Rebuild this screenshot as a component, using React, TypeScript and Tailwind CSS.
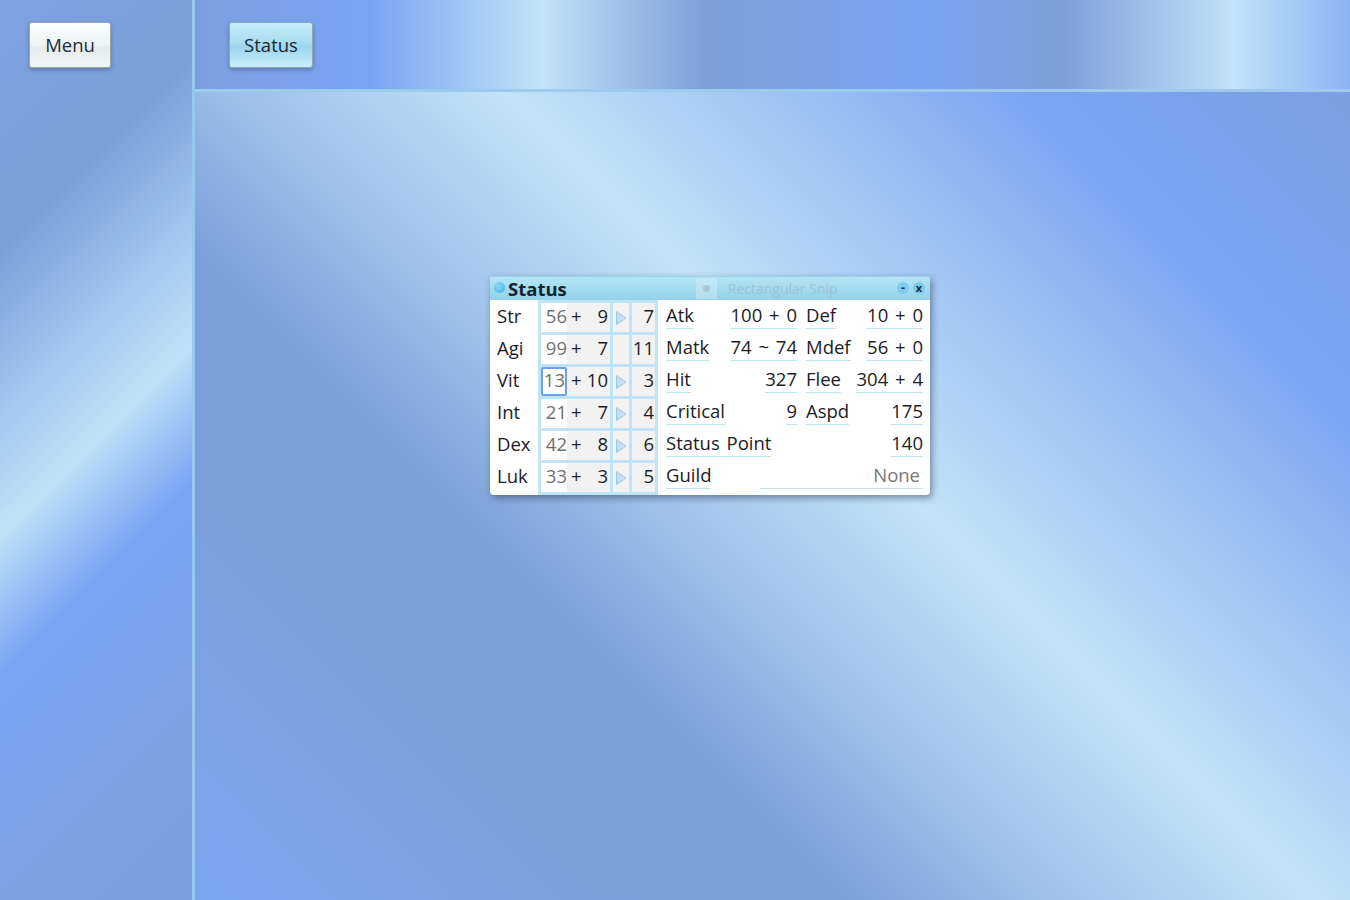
import type { ReactNode } from 'react';

type StatRow = { name: string; base: number; bonus: number; cost: number; canRaise: boolean; focused?: boolean };

const stats: StatRow[] = [
  { name: 'Str', base: 56, bonus: 9, cost: 7, canRaise: true },
  { name: 'Agi', base: 99, bonus: 7, cost: 11, canRaise: false },
  { name: 'Vit', base: 13, bonus: 10, cost: 3, canRaise: true, focused: true },
  { name: 'Int', base: 21, bonus: 7, cost: 4, canRaise: true },
  { name: 'Dex', base: 42, bonus: 8, cost: 6, canRaise: true },
  { name: 'Luk', base: 33, bonus: 3, cost: 5, canRaise: true },
];

function U({ children }: { children: ReactNode }) {
  return (
    <span className="inline-block leading-[22px] pb-[2px] border-b border-[#bfe3f3] whitespace-nowrap">
      {children}
    </span>
  );
}

function RaiseArrow() {
  return (
    <svg width="12" height="16" viewBox="0 0 12 16">
      <polygon points="1.5,1.5 11,8 1.5,14.5" fill="#c4dff3" stroke="#a3c6e4" strokeWidth="1" />
    </svg>
  );
}

function StatusWindow() {
  return (
    <div className="absolute left-[295px] top-[184px] w-[440px] rounded-[4px] bg-white shadow-[2px_3px_7px_rgba(20,30,60,0.45)] overflow-hidden text-[18.5px] text-[#1c1c28] [word-spacing:2px]">
      {/* Title bar */}
      <div className="h-[24px] flex items-center bg-[linear-gradient(to_bottom,#b4e4f5,#92d2ea)] border-t border-[#9fcfe6]">
        <div className="ml-[4px] mb-[3px] w-[11px] h-[11px] rounded-full bg-[radial-gradient(circle_at_35%_35%,#8ad8f6,#45b2e4)]" />
        <span className="ml-[3px] font-bold text-[18.5px] leading-[22px] text-[#17222c]">Status</span>
        <div className="ml-[129px] flex items-center h-[20px]">
          <div className="w-[21px] h-[20px] bg-white/25 flex items-center justify-center">
            <div className="w-[7px] h-[7px] rounded-full bg-[#a8c6d6]" />
          </div>
          <span className="ml-[11px] text-[14px] text-[#9cc2d6] [word-spacing:0px]">Rectangular Snip</span>
        </div>
        <div className="ml-auto mr-[5px] mb-[2px] flex items-center gap-[4px]">
          <div className="w-[12px] h-[12px] rounded-full bg-[#7fcbec] flex items-center justify-center text-[12px] leading-none font-bold text-[#1f2a33]">-</div>
          <div className="w-[12px] h-[12px] rounded-full bg-[#7fcbec] flex items-center justify-center text-[11px] leading-none font-bold text-[#1f2a33]">x</div>
        </div>
      </div>

      {/* Body */}
      <div className="flex">
        {/* Stat names */}
        <div className="w-[48px] pl-[7px] pt-[3px] flex flex-col gap-[3px]">
          {stats.map((s) => (
            <div key={s.name} className="h-[29px] flex items-center pb-[3px]">{s.name}</div>
          ))}
        </div>

        {/* Stat values */}
        <div className="w-[120px] bg-[#bfe4f5] p-[3px] grid grid-cols-[69px_16px_23px] auto-rows-[29px] gap-[3px]">
          {stats.map((s) => (
            <div key={s.name} className="contents">
              <div className="flex items-center bg-[#f2f2f2]">
                <div
                  className={`w-[26px] h-full flex items-center justify-end pb-[3px] bg-white text-[#707070] ${
                    s.focused ? 'border-2 border-[#6f9fe6] rounded-[2px]' : ''
                  }`}
                >
                  {s.base}
                </div>
                <span className="ml-[4px] mb-[3px]">+</span>
                <span className="ml-auto pr-[2px] mb-[3px]">{s.bonus}</span>
              </div>
              <div className="flex items-center justify-center bg-[#f2f2f2]">{s.canRaise && <RaiseArrow />}</div>
              <div className="flex items-center justify-end pr-[1px] pb-[3px] bg-[#f2f2f2]">{s.cost}</div>
            </div>
          ))}
        </div>

        {/* Derived values */}
        <div className="flex-1 pl-[8px] pr-[7px] pt-[3px] flex flex-col gap-[3px]">
          <div className="h-[29px] flex items-start pt-[1px]">
            <div className="w-[131px] flex justify-between"><U>Atk</U><U>100 + 0</U></div>
            <div className="ml-[9px] w-[117px] flex justify-between"><U>Def</U><U>10 + 0</U></div>
          </div>
          <div className="h-[29px] flex items-start pt-[1px]">
            <div className="w-[131px] flex justify-between"><U>Matk</U><U>74 ~ 74</U></div>
            <div className="ml-[9px] w-[117px] flex justify-between"><U>Mdef</U><U>56 + 0</U></div>
          </div>
          <div className="h-[29px] flex items-start pt-[1px]">
            <div className="w-[131px] flex justify-between"><U>Hit</U><U>327</U></div>
            <div className="ml-[9px] w-[117px] flex justify-between"><U>Flee</U><U>304 + 4</U></div>
          </div>
          <div className="h-[29px] flex items-start pt-[1px]">
            <div className="w-[131px] flex justify-between"><U>Critical</U><U>9</U></div>
            <div className="ml-[9px] w-[117px] flex justify-between"><U>Aspd</U><U>175</U></div>
          </div>
          <div className="h-[29px] flex items-start pt-[1px]">
            <div className="w-[131px] flex justify-between"><U>Status Point</U></div>
            <div className="ml-[9px] w-[117px] flex justify-end"><U>140</U></div>
          </div>
          <div className="h-[29px] flex items-start pt-[1px]">
            <U>Guild</U>
            <div className="ml-auto w-[163px] leading-[22px] pb-[2px] border-b border-[#bfe3f3] text-right pr-[3px] text-[#777]">None</div>
          </div>
        </div>
      </div>
    </div>
  );
}

export default function App() {
  return (
    <div className="flex w-full h-screen overflow-hidden font-['Open_Sans',sans-serif]">
      {/* Sidebar */}
      <aside className="w-[195px] shrink-0 border-r-[3px] border-[#98c8ee] pl-[29px] pt-[22px] bg-[linear-gradient(135deg,#7ea2e4_0%,#7c9fd8_23%,#a0c4ee_37%,#c0e2f8_49%,#78a4f2_62%,#7ca2e4_82%,#7a9fe0_100%)]">
        <button className="w-[82px] h-[46px] rounded-[3px] border border-[#9aa6ae] bg-[linear-gradient(to_bottom,#fbfefe,#eef3f3_50%,#e5ebec_56%,#f2f6f6)] shadow-[0_2px_4px_rgba(0,0,0,0.25)] text-[18.5px] text-[#1e2b3a]">
          Menu
        </button>
      </aside>

      <div className="flex-1 flex flex-col">
        {/* Header */}
        <header className="h-[92px] shrink-0 border-b-[3px] border-[#9ccbec] pl-[34px] pt-[22px] bg-[linear-gradient(to_right,#7d9fe0_0%,#78a4f2_15%,#c2e3f8_30%,#7e9fd9_44%,#78a4f0_63%,#7e9fd9_75%,#c2e3f8_90%,#8ab4f4_100%)]">
          <button className="w-[84px] h-[46px] rounded-[3px] border border-[#8da6b8] bg-[linear-gradient(to_bottom,#c6edf9,#a8ddf0_45%,#9cd5ef_55%,#c8edf9)] shadow-[0_2px_4px_rgba(0,0,0,0.25)] text-[18.5px] text-[#1a2733]">
            Status
          </button>
        </header>

        {/* Desktop */}
        <main className="relative flex-1 bg-[linear-gradient(45deg,#7aa6f0_0%,#7da0dc_20%,#7c9fd9_33%,#a0c2ea_44%,#c2e3f8_57%,#9cc0f2_72%,#78a4f2_84%,#7aa0e0_100%)]">
          <StatusWindow />
        </main>
      </div>
    </div>
  );
}
